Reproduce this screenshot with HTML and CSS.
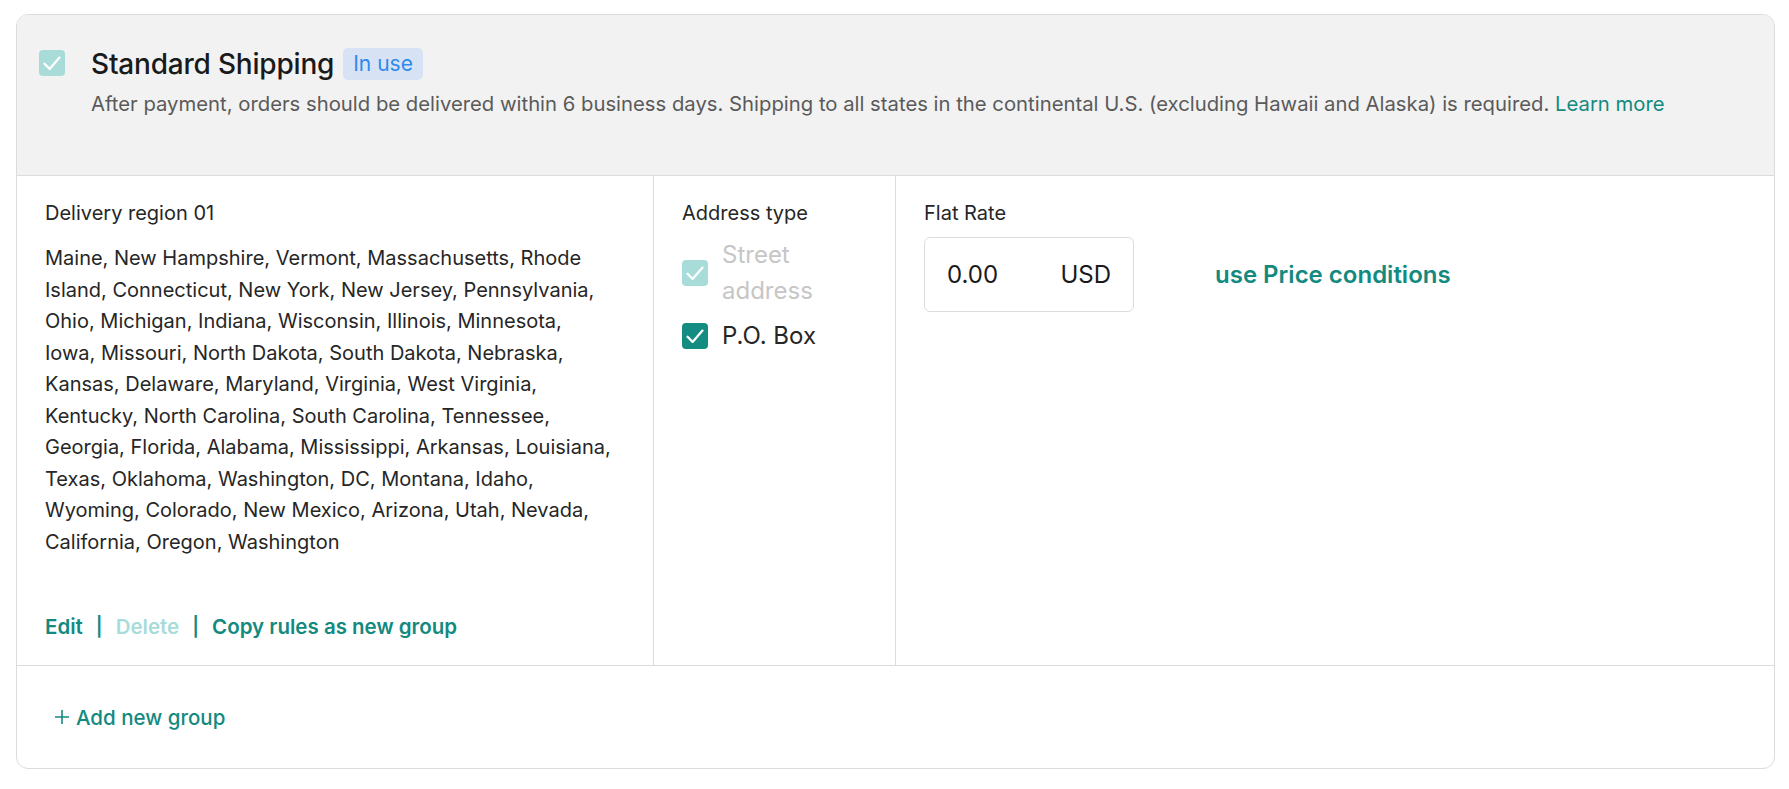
FILE: index.html
```html
<!DOCTYPE html>
<html lang="en">
<head>
<meta charset="utf-8">
<title>Standard Shipping</title>
<link rel="stylesheet" href="styles.css">
</head>
<body>
<div class="card">
  <div class="head">
    <span class="cb cb-light"><svg viewBox="0 0 26 26" width="26" height="26"><path d="M5.5 13.8 L10.6 18.9 L20.5 7.6" fill="none" stroke="#fff" stroke-width="2.3" stroke-linecap="round" stroke-linejoin="round"/></svg></span>
    <div class="head-text">
      <div class="title-row">
        <h2 class="title">Standard Shipping</h2>
        <span class="badge">In use</span>
      </div>
      <p class="desc">After payment, orders should be delivered within 6 business days. Shipping to all states in the continental U.S. (excluding Hawaii and Alaska) is required. <a class="learn">Learn more</a></p>
    </div>
  </div>
  <div class="rows">
    <div class="col region">
      <div class="label">Delivery region 01</div>
      <p class="states">Maine, New Hampshire, Vermont, Massachusetts, Rhode Island, Connecticut, New York, New Jersey, Pennsylvania, Ohio, Michigan, Indiana, Wisconsin, Illinois, Minnesota, Iowa, Missouri, North Dakota, South Dakota, Nebraska, Kansas, Delaware, Maryland, Virginia, West Virginia, Kentucky, North Carolina, South Carolina, Tennessee, Georgia, Florida, Alabama, Mississippi, Arkansas, Louisiana, Texas, Oklahoma, Washington, DC, Montana, Idaho, Wyoming, Colorado, New Mexico, Arizona, Utah, Nevada, California, Oregon, Washington</p>
      <div class="actions">
        <a class="act">Edit</a><span class="sep">|</span><a class="act act-off">Delete</a><span class="sep">|</span><a class="act">Copy rules as new group</a>
      </div>
    </div>
    <div class="col addr">
      <div class="label">Address type</div>
      <div class="opt opt-off">
        <span class="cb cb-light"><svg viewBox="0 0 26 26" width="26" height="26"><path d="M5.5 13.8 L10.6 18.9 L20.5 7.6" fill="none" stroke="#fff" stroke-width="2.3" stroke-linecap="round" stroke-linejoin="round"/></svg></span>
        <span class="opt-text">Street address</span>
      </div>
      <div class="opt">
        <span class="cb cb-dark"><svg viewBox="0 0 26 26" width="26" height="26"><path d="M5.5 13.8 L10.6 18.9 L20.5 7.6" fill="none" stroke="#fff" stroke-width="2.3" stroke-linecap="round" stroke-linejoin="round"/></svg></span>
        <span class="opt-text">P.O. Box</span>
      </div>
    </div>
    <div class="col rate">
      <div class="label">Flat Rate</div>
      <div class="rate-row">
        <div class="input"><span>0.00</span><span>USD</span></div>
        <a class="cond">use Price conditions</a>
      </div>
    </div>
  </div>
  <div class="foot">
    <a class="add"><svg viewBox="0 0 16 16" width="16" height="16"><path d="M8 1 V15 M1 8 H15" stroke="#138a80" stroke-width="1.6" fill="none"/></svg>Add new group</a>
  </div>
</div>
</body>
</html>
```

FILE: styles.css
```css
* { box-sizing: border-box; }
html, body { margin: 0; padding: 0; background: #fff; }
body {
  font-family: Inter, "Noto Sans", "Liberation Sans", sans-serif;
  color: #262626;
  padding: 14px 14px 20px 16px;
}
a { text-decoration: none; cursor: pointer; }

.card {
  border: 1px solid #dcdcdc;
  border-radius: 12px;
  overflow: hidden;
  background: #fff;
}

.head {
  background: #f2f2f2;
  display: flex;
  align-items: flex-start;
  padding: 33px 22px 57px 22px;
  border-bottom: 1px solid #dcdcdc;
}
.head > .cb { margin-top: 2px; }
.head-text { margin-left: 26px; }
.title-row { display: flex; align-items: center; height: 31px; }
.title {
  margin: 0;
  font-size: 28px;
  font-weight: 500;
  color: #1a1a1a;
  letter-spacing: -0.2px;
}
.badge {
  margin-left: 9px;
  height: 32px;
  padding: 0 10px;
  border-radius: 5px;
  background: #d7e3f4;
  color: #2f89ee;
  font-size: 21px;
  line-height: 32px;
}
.desc {
  margin: 11px 0 0 0;
  font-size: 20.3px;
  line-height: 28px;
  color: #5a5a5a;
}
.learn { color: #138a80; }

.cb {
  flex: none;
  width: 26px;
  height: 26px;
  border-radius: 4px;
  display: inline-flex;
}
.cb-light { background: #a8dcd8; }
.cb-dark { background: #138c82; }

.rows {
  display: flex;
  border-bottom: 1px solid #dcdcdc;
}
.col { padding: 23px 28px 24px 28px; }
.region { width: 637px; border-right: 1px solid #dcdcdc; padding-right: 38px; }
.addr { width: 242px; border-right: 1px solid #dcdcdc; padding-right: 40px; }
.rate { flex: 1; }

.label {
  font-size: 20px;
  line-height: 28px;
  color: #262626;
}
.states {
  margin: 16px 0 0 0;
  font-size: 20px;
  line-height: 31.5px;
  color: #262626;
}
.actions {
  margin-top: 55px;
  font-size: 20.5px;
  line-height: 28px;
  font-weight: 600;
  display: flex;
  align-items: center;
}
.act { color: #138a80; }
.act-off { color: #a8dcd8; }
.sep { color: #138a80; font-weight: 600; margin: 0 13px; font-size: 19px; }

.opt {
  display: flex;
  align-items: center;
  gap: 14px;
  font-size: 24px;
  line-height: 36px;
  color: #262626;
  margin-top: 10px;
}
.opt + .opt { margin-top: 9px; }
.opt-off .opt-text { color: #c6c6c6; }

.rate-row {
  display: flex;
  align-items: center;
  margin-top: 10px;
}
.input {
  width: 210px;
  height: 75px;
  border: 1px solid #dcdcdc;
  border-radius: 6px;
  display: flex;
  align-items: center;
  justify-content: space-between;
  padding: 0 22px;
  font-size: 24px;
  color: #1a1a1a;
}
.cond {
  margin-left: 81px;
  color: #138a80;
  font-size: 24px;
  font-weight: 600;
}

.foot {
  height: 102px;
  display: flex;
  align-items: center;
  padding-left: 37px;
}
.add {
  color: #138a80;
  font-size: 20.5px;
  font-weight: 500;
  display: inline-flex;
  align-items: center;
  gap: 6px;
}
```
